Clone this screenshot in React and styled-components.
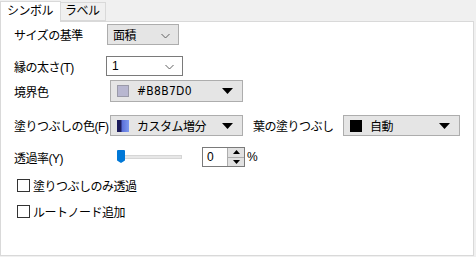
import React from "react";
import styled, { createGlobalStyle } from "styled-components";

const GlobalStyle = createGlobalStyle`
  html, body {
    margin: 0;
    padding: 0;
    background: #f0f0f0;
    font-family: "Liberation Sans", "Noto Sans CJK JP", sans-serif;
    font-size: 12px;
    letter-spacing: -0.5px;
    color: #000;
  }
`;

const App = () => {
  return (
    <Window>
      <GlobalStyle />
      <TabBar>
        <Tab active>シンボル</Tab>
        <Tab>ラベル</Tab>
      </TabBar>
      <Panel>
        <Row h={21} top={2}>
          <Label w={93}>サイズの基準</Label>
          <Combo w={72} grey>
            <ComboText>面積</ComboText>
            <Chevron />
          </Combo>
        </Row>
        <Row h={20} top={11}>
          <Label w={92}>縁の太さ(T)</Label>
          <Combo w={77}>
            <ComboText>1</ComboText>
            <Chevron />
          </Combo>
        </Row>
        <Row h={22} top={4}>
          <Label w={96}>境界色</Label>
          <Combo w={133} grey>
            <Swatch color="#B8B7D0" bordered />
            <ComboText mono>#B8B7D0</ComboText>
            <Triangle />
          </Combo>
        </Row>
        <Row h={21} top={13}>
          <Label w={96}>塗りつぶしの色(F)</Label>
          <Combo w={133} grey>
            <GradientSwatch />
            <ComboText>カスタム増分</ComboText>
            <Triangle />
          </Combo>
          <Label w={90} left={10}>葉の塗りつぶし</Label>
          <Combo w={117} grey>
            <Swatch color="#000" />
            <ComboText>自動</ComboText>
            <Triangle />
          </Combo>
        </Row>
        <Row h={20} top={11}>
          <Label w={102}>透過率(Y)</Label>
          <Slider>
            <Track />
            <Thumb />
          </Slider>
          <Spin>
            <SpinInput>0</SpinInput>
            <SpinButtons>
              <SpinButton>
                <SpinArrow up />
              </SpinButton>
              <SpinButton>
                <SpinArrow />
              </SpinButton>
            </SpinButtons>
          </Spin>
          <Percent>%</Percent>
        </Row>
        <Row h={13} top={12}>
          <Check />
          <CheckLabel>塗りつぶしのみ透過</CheckLabel>
        </Row>
        <Row h={13} top={13}>
          <Check />
          <CheckLabel>ルートノード追加</CheckLabel>
        </Row>
      </Panel>
    </Window>
  );
};

const Window = styled.div`
  width: 476px;
  height: 257px;
  display: flex;
  flex-direction: column;
  background: #f0f0f0;
  overflow: hidden;
`;

const TabBar = styled.div`
  display: flex;
  align-items: flex-end;
  height: 21px;
  position: relative;
  z-index: 1;
`;

const Tab = styled.div`
  box-sizing: border-box;
  height: ${(p) => (p.active ? "21px" : "19px")};
  margin-bottom: ${(p) => (p.active ? "-1px" : "0")};
  padding: ${(p) => (p.active ? "1px 7px 0 6px" : "0 5px 0 4px")};
  background: ${(p) => (p.active ? "#fff" : "#f0f0f0")};
  border: 1px solid #d9d9d9;
  border-bottom: ${(p) => (p.active ? "none" : "1px solid #d9d9d9")};
  margin-left: ${(p) => (p.active ? "0" : "-1px")};
  line-height: 17px;
  white-space: nowrap;
`;

const Panel = styled.div`
  box-sizing: border-box;
  width: 474px;
  height: 235px;
  background: #fff;
  border: 1px solid #d9d9d9;
  display: flex;
  flex-direction: column;
  padding: 0 0 0 13px;
`;

const Row = styled.div`
  display: flex;
  align-items: center;
  height: ${(p) => p.h}px;
  margin-top: ${(p) => p.top}px;
`;

const Label = styled.div`
  width: ${(p) => p.w}px;
  margin-left: ${(p) => p.left || 0}px;
  flex: none;
  white-space: nowrap;
`;

const Combo = styled.div`
  box-sizing: border-box;
  width: ${(p) => p.w}px;
  height: 100%;
  flex: none;
  display: flex;
  align-items: center;
  padding: 0 8px 0 5px;
  background: ${(p) => (p.grey ? "#e5e5e5" : "#fff")};
  border: 1px solid ${(p) => (p.grey ? "#adadad" : "#7a7a7a")};
`;

const ComboText = styled.span`
  flex: 1;
  white-space: nowrap;
  font-family: ${(p) =>
    p.mono ? '"Liberation Sans Narrow", "DejaVu Sans Condensed", sans-serif' : "inherit"};
  letter-spacing: ${(p) => (p.mono ? "0.3px" : "-0.5px")};
`;

const Chevron = () => (
  <ChevronSvg width="9" height="6" viewBox="0 0 9 6">
    <path d="M0.5 1 L4.5 5 L8.5 1" fill="none" stroke="#606060" strokeWidth="1" />
  </ChevronSvg>
);

const ChevronSvg = styled.svg`
  flex: none;
  margin-top: 2px;
`;

const Triangle = () => (
  <TriangleSvg width="11" height="6" viewBox="0 0 11 6">
    <path d="M0 0 H11 L5.5 6 Z" fill="#000" />
  </TriangleSvg>
);

const TriangleSvg = styled.svg`
  flex: none;
  margin-right: 1px;
`;

const Swatch = styled.span`
  box-sizing: border-box;
  width: 12px;
  height: 12px;
  flex: none;
  margin: 0 8px 0 1px;
  background: ${(p) => p.color};
  border: ${(p) => (p.bordered ? "1px solid #9a9aa8" : "none")};
`;

const GradientSwatch = styled.span`
  width: 12px;
  height: 12px;
  flex: none;
  margin: 0 8px 0 1px;
  background: linear-gradient(to right, #1c1c5c 0, #1c1c5c 4px, #5a6fd8 5px, #7e9af0 12px);
`;

const Slider = styled.div`
  position: relative;
  width: 65px;
  height: 100%;
  flex: none;
  margin-left: 1px;
  display: flex;
  align-items: center;
`;

const Track = styled.div`
  width: 100%;
  height: 4px;
  background: #e7e7e7;
  border: 1px solid #d6d6d6;
  box-sizing: border-box;
`;

const Thumb = styled.div`
  position: absolute;
  left: 0;
  top: 3px;
  width: 8px;
  height: 13px;
  background: #0078d7;
  border-radius: 1px 1px 3px 3px;
  clip-path: polygon(0 0, 100% 0, 100% 80%, 50% 100%, 0 80%);
`;

const Spin = styled.div`
  box-sizing: border-box;
  display: flex;
  width: 43px;
  height: 100%;
  margin-left: 20px;
  border: 1px solid #7a7a7a;
  flex: none;
`;

const SpinInput = styled.div`
  flex: 1;
  padding-left: 4px;
  line-height: 18px;
`;

const SpinButtons = styled.div`
  width: 16px;
  display: flex;
  flex-direction: column;
  border-left: 1px solid #adadad;
`;

const SpinButton = styled.div`
  flex: 1;
  background: #e1e1e1;
  display: flex;
  align-items: center;
  justify-content: center;
  & + & {
    border-top: 1px solid #adadad;
  }
`;

const SpinArrow = ({ up }) => (
  <svg width="7" height="4" viewBox="0 0 7 4">
    <path d={up ? "M0 4 H7 L3.5 0 Z" : "M0 0 H7 L3.5 4 Z"} fill="#000" />
  </svg>
);

const Percent = styled.span`
  margin-left: 2px;
`;

const Check = styled.span`
  box-sizing: border-box;
  width: 13px;
  height: 13px;
  flex: none;
  margin-left: 3px;
  border: 1px solid #333;
  background: #fff;
`;

const CheckLabel = styled.span`
  margin-left: 3px;
  white-space: nowrap;
`;

export default App;
